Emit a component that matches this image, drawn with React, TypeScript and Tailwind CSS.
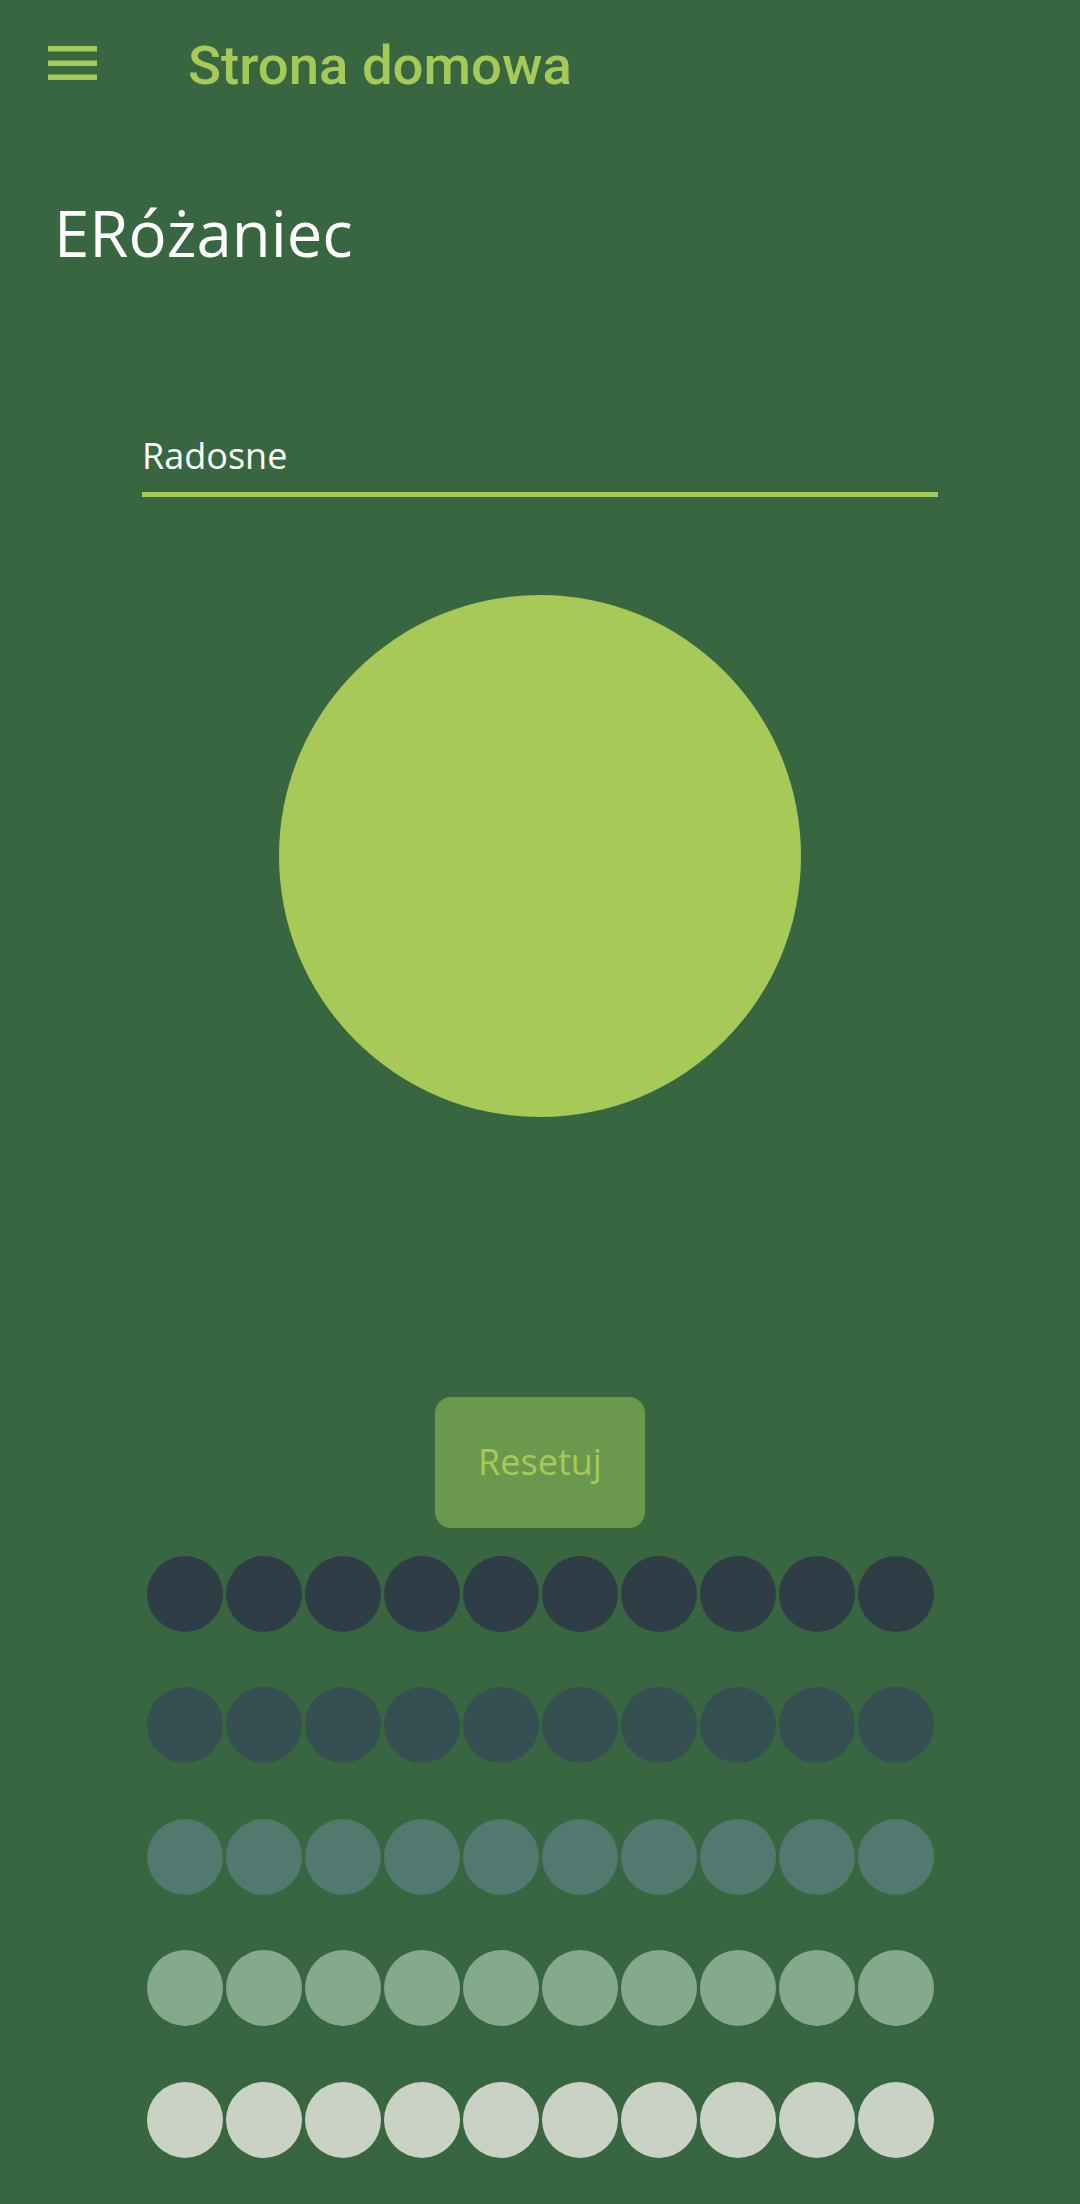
import { useState } from "react";

const beadRows = ["bg-[#2f3e46]", "bg-[#354f52]", "bg-[#52796f]", "bg-[#84a98c]", "bg-[#cad2c5]"];

function MenuIcon() {
  return (
    <svg width="49" height="35" viewBox="0 0 49 35" className="block">
      <rect x="0" y="0" width="49" height="5.5" fill="#a7c957" />
      <rect x="0" y="14.5" width="49" height="5.5" fill="#a7c957" />
      <rect x="0" y="28.5" width="49" height="5.5" fill="#a7c957" />
    </svg>
  );
}

export default function App() {
  const [mystery] = useState("Radosne");

  return (
    <div className="min-h-[2204px] w-full bg-[#386641] font-['Open_Sans',sans-serif]">
      {/* Toolbar */}
      <header className="flex h-[126px] items-center">
        <button className="ml-[48px] mt-[1px]">
          <MenuIcon />
        </button>
        <h1 className="ml-[91px] mt-[4px] font-['Roboto',sans-serif] text-[54.5px] font-medium leading-none text-[#a7c957]">
          Strona domowa
        </h1>
      </header>

      {/* Title */}
      <h2 className="ml-[54px] mt-[75px] text-[63.5px] leading-none text-white">ERóżaniec</h2>

      {/* Mystery selector */}
      <div className="mx-auto mt-[173px] w-[796px]">
        <div className="text-[36px] leading-none text-white">{mystery}</div>
        <div className="mt-[18px] h-[5px] bg-[#a7c957]" />
      </div>

      {/* Big bead */}
      <div className="mx-auto mt-[98px] h-[522px] w-[522px] rounded-full bg-[#a7c957]" />

      {/* Reset */}
      <div className="mt-[280px] flex justify-center">
        <button className="h-[131px] w-[210px] rounded-[16px] bg-[#6a994e] text-[36px] leading-none text-[#a7c957]">
          Resetuj
        </button>
      </div>

      {/* Decades */}
      <div className="mt-[28px] flex flex-col items-center gap-[55.5px]">
        {beadRows.map((color, r) => (
          <div key={r} className="flex gap-[3px]">
            {Array.from({ length: 10 }).map((_, i) => (
              <div key={i} className={`h-[76px] w-[76px] rounded-full ${color}`} />
            ))}
          </div>
        ))}
      </div>
    </div>
  );
}
